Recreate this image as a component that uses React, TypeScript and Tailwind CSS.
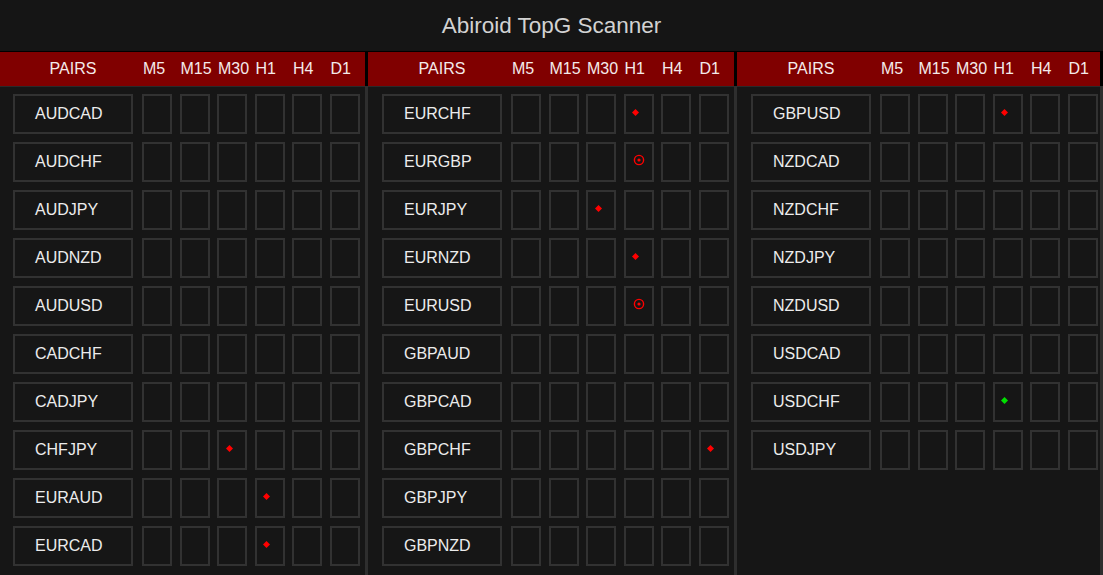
import React from 'react';

type Signal = { tf: number; kind: 'dot' | 'ring' | 'green' };
type Pair = { name: string; signals?: Signal[] };

const timeframes = ['M5', 'M15', 'M30', 'H1', 'H4', 'D1'];

const panels: Pair[][] = [
  [
    { name: 'AUDCAD' },
    { name: 'AUDCHF' },
    { name: 'AUDJPY' },
    { name: 'AUDNZD' },
    { name: 'AUDUSD' },
    { name: 'CADCHF' },
    { name: 'CADJPY' },
    { name: 'CHFJPY', signals: [{ tf: 2, kind: 'dot' }] },
    { name: 'EURAUD', signals: [{ tf: 3, kind: 'dot' }] },
    { name: 'EURCAD', signals: [{ tf: 3, kind: 'dot' }] },
  ],
  [
    { name: 'EURCHF', signals: [{ tf: 3, kind: 'dot' }] },
    { name: 'EURGBP', signals: [{ tf: 3, kind: 'ring' }] },
    { name: 'EURJPY', signals: [{ tf: 2, kind: 'dot' }] },
    { name: 'EURNZD', signals: [{ tf: 3, kind: 'dot' }] },
    { name: 'EURUSD', signals: [{ tf: 3, kind: 'ring' }] },
    { name: 'GBPAUD' },
    { name: 'GBPCAD' },
    { name: 'GBPCHF', signals: [{ tf: 5, kind: 'dot' }] },
    { name: 'GBPJPY' },
    { name: 'GBPNZD' },
  ],
  [
    { name: 'GBPUSD', signals: [{ tf: 3, kind: 'dot' }] },
    { name: 'NZDCAD' },
    { name: 'NZDCHF' },
    { name: 'NZDJPY' },
    { name: 'NZDUSD' },
    { name: 'USDCAD' },
    { name: 'USDCHF', signals: [{ tf: 3, kind: 'green' }] },
    { name: 'USDJPY' },
  ],
];

// width / left padding per panel, measured from the screenshot
const panelStyles = [
  { w: 'w-[365px]', pl: 'pl-[13px]' },
  { w: 'w-[366px]', pl: 'pl-[14px]' },
  { w: 'w-[363px]', pl: 'pl-[14px]' },
];

const Mark: React.FC<{ kind: Signal['kind'] }> = ({ kind }) => {
  if (kind === 'ring') {
    return (
      <svg width="12" height="12" viewBox="0 0 12 12" className="-translate-y-[2px]">
        <circle cx="6" cy="6" r="4.6" fill="none" stroke="#ff0000" strokeWidth="1.4" />
        <circle cx="6" cy="6" r="1.6" fill="#ff0000" />
      </svg>
    );
  }
  return (
    <svg
      width="7"
      height="7"
      viewBox="0 0 7 7"
      className="-translate-x-[3px] -translate-y-[2px]"
    >
      <path d="M3.5 0 L7 3.5 L3.5 7 L0 3.5 Z" fill={kind === 'green' ? '#00e000' : '#ff0000'} />
    </svg>
  );
};

const Panel: React.FC<{ pairs: Pair[]; idx: number }> = ({ pairs, idx }) => {
  const ps = panelStyles[idx];
  return (
    <div className="flex">
      <div className={`flex ${ps.w} flex-col`}>
        {/* Header */}
        <div className={`flex h-[34px] items-center bg-[#800000] ${ps.pl} text-[16px] text-[#f4eaea]`}>
          <div className="w-[120px] text-center">PAIRS</div>
          <div className="ml-[9px] flex gap-[7.5px]">
            {timeframes.map((tf) => (
              <div key={tf} className="w-[30px] whitespace-nowrap pl-px">
                {tf}
              </div>
            ))}
          </div>
        </div>
        <div className="h-px bg-[#2a2a2a]" />
        {/* Rows */}
        <div className={`flex flex-col gap-[8px] ${ps.pl} pt-[7px]`}>
          {pairs.map((p) => (
            <div key={p.name} className="flex h-[40px]">
              <div className="flex w-[120px] items-center border-2 border-[#323232] pl-[20px] text-[16px] text-[#ececec]">
                {p.name}
              </div>
              <div className="ml-[9px] flex gap-[7.5px]">
                {timeframes.map((tf, i) => {
                  const sig = p.signals?.find((s) => s.tf === i);
                  return (
                    <div
                      key={tf}
                      className="flex w-[30px] items-center justify-center border-2 border-[#323232]"
                    >
                      {sig && <Mark kind={sig.kind} />}
                    </div>
                  );
                })}
              </div>
            </div>
          ))}
        </div>
      </div>
      {/* Separator */}
      <div className="flex w-[3px] flex-col">
        <div className="h-[34px] bg-black" />
        <div className="flex-1 bg-[#2e2e2e]" />
      </div>
    </div>
  );
};

export default function App() {
  return (
    <div
      className="h-[575px] w-[1103px] overflow-hidden bg-[#161616]"
      style={{ fontFamily: '"Liberation Sans", Arial, sans-serif' }}
    >
      <div className="flex h-[51px] items-center justify-center bg-[#151515] text-[22.5px] text-[#d2d2d2]">
        Abiroid TopG Scanner
      </div>
      <div className="h-px bg-black" />
      <div className="flex h-[523px]">
        {panels.map((pairs, i) => (
          <Panel key={i} pairs={pairs} idx={i} />
        ))}
      </div>
    </div>
  );
}
